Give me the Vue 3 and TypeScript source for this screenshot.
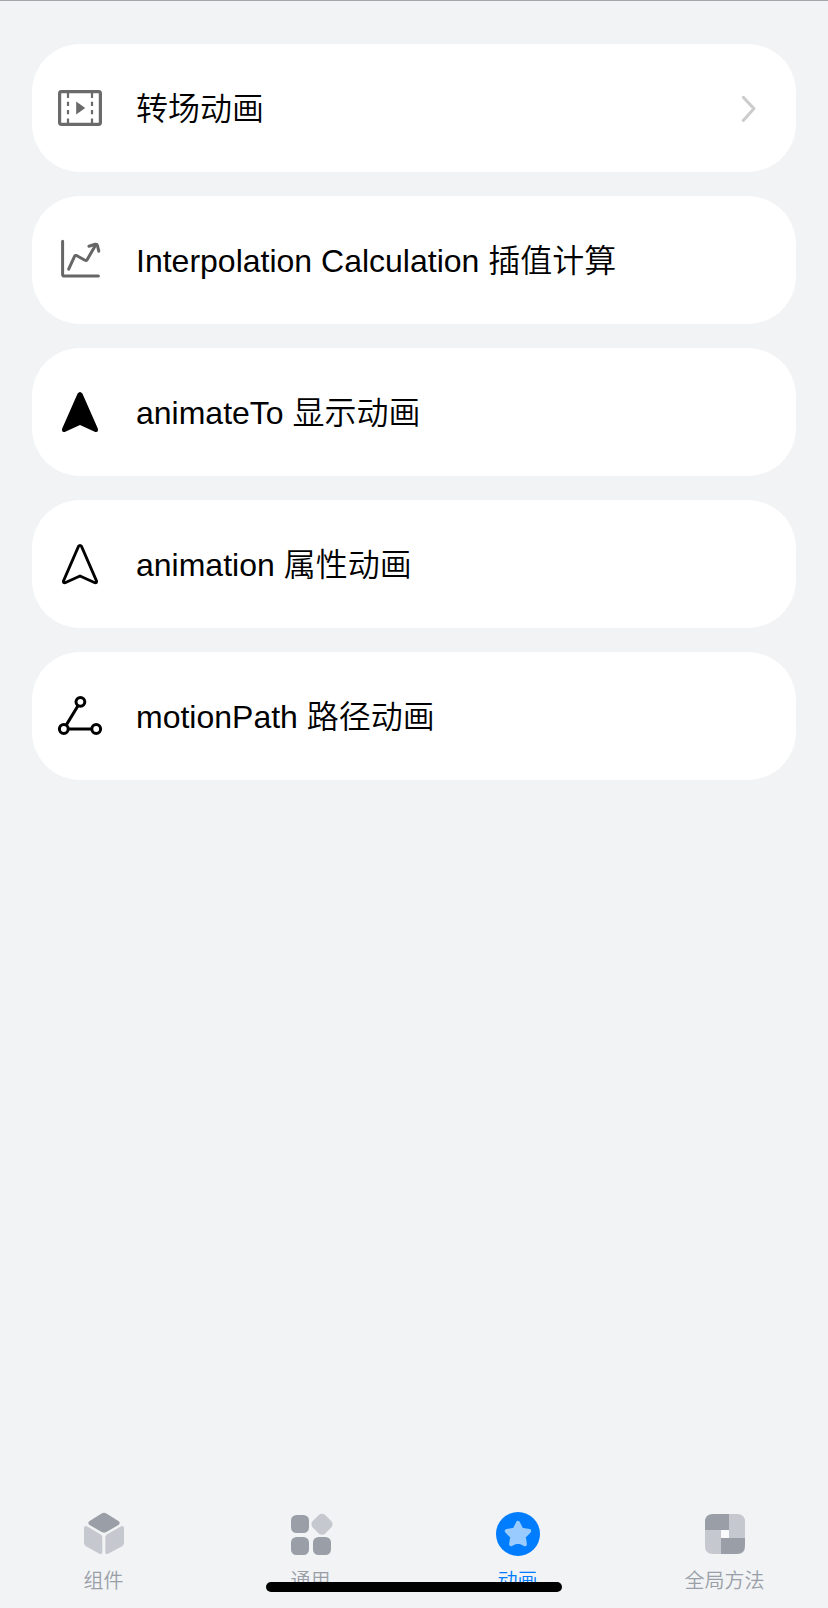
<script setup lang="ts">
interface Item {
  icon: string
  label: string
  arrow?: boolean
}

const items: Item[] = [
  { icon: 'film', label: '转场动画', arrow: true },
  { icon: 'chart', label: 'Interpolation Calculation 插值计算' },
  { icon: 'solid', label: 'animateTo 显示动画' },
  { icon: 'outline', label: 'animation 属性动画' },
  { icon: 'path', label: 'motionPath 路径动画' },
]

const tabs = [
  { icon: 'cube', label: '组件', active: false },
  { icon: 'grid', label: '通用', active: false },
  { icon: 'star', label: '动画', active: true },
  { icon: 'blocks', label: '全局方法', active: false },
]
</script>

<template>
  <div class="screen">
    <main class="list">
      <div v-for="item in items" :key="item.icon" class="card">
        <svg v-if="item.icon === 'film'" class="icon" viewBox="0 0 48 48" fill="none" stroke="#6a6a6a">
          <rect x="3.6" y="7.6" width="40.8" height="32.8" rx="1.8" stroke-width="3.2" />
          <path d="M12 9v5M12 17.7v4.4M12 26v4.2M12 34.4V39M36 9v5M36 17.7v4.4M36 26v4.2M36 34.4V39" stroke-width="2.2" />
          <path d="M20.2 17.6 29.2 24l-9 6.4z" fill="#6a6a6a" stroke="none" />
        </svg>
        <svg v-else-if="item.icon === 'chart'" class="icon" viewBox="0 0 48 48" fill="none" stroke="#666" stroke-width="3" stroke-linecap="round" stroke-linejoin="round">
          <path d="M6.6 5.3V38.4Q6.6 40 8.2 40H42.4" />
          <path d="M12.7 33.2 18.4 20.6Q19.2 18.8 20.9 19.7L29 24.3Q30.3 25 31.1 23.7L39.8 8.8" />
          <path d="M32.9 10.2 39.4 8.2Q41 7.9 41.4 9.4L42.8 15.2" />
        </svg>
        <svg v-else-if="item.icon === 'solid'" class="icon" viewBox="0 0 48 48">
          <path d="M21.5 5.8Q24 2.2 26.5 5.8L41.9 40.8Q42.5 44.6 39.3 43.9L24 37 8.7 43.9Q5.5 44.6 6.1 40.8Z" />
        </svg>
        <svg v-else-if="item.icon === 'outline'" class="icon" viewBox="0 0 48 48" fill="none" stroke="#000" stroke-width="2.8" stroke-linejoin="round">
          <path d="M22.5 6.4Q24 4.2 25.5 6.4L40.6 41.1Q41 43.2 38.9 42.7L24 36 9.1 42.7Q7 43.2 7.4 41.1Z" />
        </svg>
        <svg v-else class="icon" viewBox="0 0 48 48" fill="none" stroke="#000" stroke-width="3">
          <circle cx="24.4" cy="9.8" r="4.4" />
          <circle cx="7.8" cy="37" r="4.4" />
          <circle cx="40.2" cy="37" r="4.4" />
          <path d="M22 13.7 10.2 33.1M12.3 37H35.7" />
        </svg>
        <span class="label">{{ item.label }}</span>
        <svg v-if="item.arrow" class="chevron" viewBox="0 0 24 48" fill="none" stroke="#ccc" stroke-width="3" stroke-linecap="round" stroke-linejoin="round">
          <path d="M7.3 13.3 18 24.6 7.3 36.4" />
        </svg>
      </div>
    </main>

    <nav class="tabs">
      <div v-for="tab in tabs" :key="tab.icon" class="tab" :class="{ active: tab.active }">
        <svg v-if="tab.icon === 'cube'" class="tab-icon" viewBox="0 0 48 48" fill="#c5c8ce">
          <path fill="#9a9fa7" d="M21.6 3.6Q24 2 26.4 3.6L38.4 11Q41 13 38.4 15L26.4 21.9Q24 23.3 21.6 21.9L9.6 15Q7 13 9.6 11Z" />
          <path d="M4 18Q4.3 15 7.2 16.4L20.4 24.2Q22.3 25.4 22.3 27.6V42.2Q21.8 45 19.4 43.8L6 36.2Q4 35 4 32.8Z" />
          <path d="M44 18Q43.7 15 40.8 16.4L27.2 24.2Q25.3 25.4 25.3 27.6V42.2Q25.8 45 28.2 43.8L42 36.2Q44 35 44 32.8Z" />
        </svg>
        <svg v-else-if="tab.icon === 'grid'" class="tab-icon" viewBox="0 0 48 48" fill="#9a9fa7">
          <rect x="4" y="5" width="18" height="18" rx="5.5" />
          <rect x="4" y="27" width="18" height="18" rx="5.5" />
          <rect x="26" y="27" width="18" height="18" rx="5.5" />
          <rect x="26.2" y="5.5" width="17.6" height="17.6" rx="4.6" transform="rotate(45 35 14.3)" fill="#c5c8ce" />
        </svg>
        <svg v-else-if="tab.icon === 'star'" class="tab-icon" viewBox="0 0 48 48">
          <circle cx="24" cy="24" r="22" fill="#007dff" />
          <path d="M24 12.8 27.4 19.7 35.2 21 29.8 26.6 30.9 34.2 24 31 17.1 34.2 18.2 26.6 12.8 21 20.6 19.7Z" fill="#99cbff" stroke="#99cbff" stroke-width="4" stroke-linejoin="round" />
        </svg>
        <svg v-else class="tab-icon" viewBox="0 0 48 48">
          <path d="M28 4H36Q44 4 44 12V28H28Z" fill="#c5c8ce" />
          <path d="M4 20H20V44H12Q4 44 4 36Z" fill="#c5c8ce" />
          <path d="M12 4H28V20H4V12Q4 4 12 4Z" fill="#9a9fa7" />
          <path d="M20 28H44V36Q44 44 36 44H20Z" fill="#9a9fa7" />
          <path d="M20 20H28V28H20Z" fill="#f9fafb" />
        </svg>
        <span class="tab-label">{{ tab.label }}</span>
      </div>
      <div class="home-indicator"></div>
    </nav>
  </div>
</template>

<style>
body {
  background: #f1f3f5;
}
</style>

<style scoped>
.screen {
  box-sizing: border-box;
  height: 1608px;
  display: flex;
  flex-direction: column;
  justify-content: space-between;
  overflow: hidden;
  border-top: 1px solid #a5a6aa;
  background: #f1f3f5;
  font-family: "Liberation Sans", "Noto Sans CJK SC", sans-serif;
  font-weight: 350;
}
.list {
  display: flex;
  flex-direction: column;
  gap: 24px;
  padding: 43px 32px 0;
}
.card {
  box-sizing: border-box;
  height: 128px;
  display: flex;
  align-items: center;
  padding: 0 32px 0 24px;
  border-radius: 48px;
  background: #fff;
}
.icon {
  flex: none;
  width: 48px;
  height: 48px;
}
.label {
  flex: 1;
  margin-left: 32px;
  padding-top: 2px;
  color: #000;
  font-size: 32px;
  line-height: 40px;
  white-space: nowrap;
}
.chevron {
  width: 24px;
  height: 48px;
  margin-right: 4px;
}
.tabs {
  position: relative;
  display: grid;
  grid-template-columns: repeat(4, 207px);
  height: 98px;
}
.tab {
  display: flex;
  flex-direction: column;
  align-items: center;
  color: #9a9fa7;
}
.tab-icon {
  width: 48px;
  height: 48px;
}
.tab-label {
  margin-top: 9px;
  font-size: 20px;
  line-height: 28px;
}
.active {
  color: #007dff;
}
.home-indicator {
  position: absolute;
  left: 266px;
  bottom: 16px;
  width: 296px;
  height: 10px;
  border-radius: 5px;
  background: #000;
}
</style>
